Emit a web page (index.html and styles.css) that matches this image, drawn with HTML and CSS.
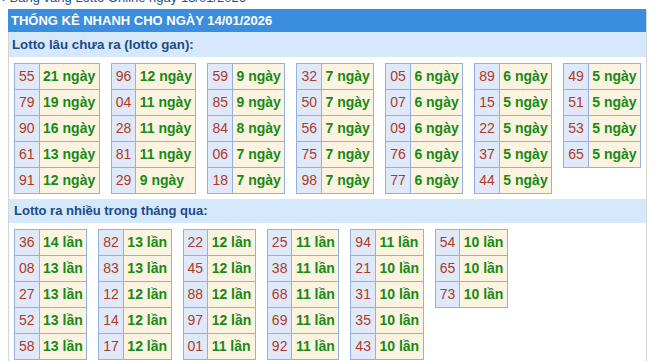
FILE: index.html
```html
<!DOCTYPE html>
<html lang="vi">
<head>
<meta charset="utf-8">
<title>Thống kê nhanh</title>
<link rel="stylesheet" href="styles.css">
</head>
<body>
<div class="prev"><span class="arrow">›</span> Bảng vàng Lotto Online ngày 13/01/2026</div>
<div class="box">
  <div class="head">THỐNG KÊ NHANH CHO NGÀY 14/01/2026</div>
  <div class="sub">Lotto lâu chưa ra (lotto gan):</div>
  <div class="tables">
    <table class="t"><tr><td class="n">55</td><td class="v">21 ngày</td></tr><tr><td class="n">79</td><td class="v">19 ngày</td></tr><tr><td class="n">90</td><td class="v">16 ngày</td></tr><tr><td class="n">61</td><td class="v">13 ngày</td></tr><tr><td class="n">91</td><td class="v">12 ngày</td></tr></table>
    <table class="t"><tr><td class="n">96</td><td class="v">12 ngày</td></tr><tr><td class="n">04</td><td class="v">11 ngày</td></tr><tr><td class="n">28</td><td class="v">11 ngày</td></tr><tr><td class="n">81</td><td class="v">11 ngày</td></tr><tr><td class="n">29</td><td class="v">9 ngày</td></tr></table>
    <table class="t"><tr><td class="n">59</td><td class="v">9 ngày</td></tr><tr><td class="n">85</td><td class="v">9 ngày</td></tr><tr><td class="n">84</td><td class="v">8 ngày</td></tr><tr><td class="n">06</td><td class="v">7 ngày</td></tr><tr><td class="n">18</td><td class="v">7 ngày</td></tr></table>
    <table class="t"><tr><td class="n">32</td><td class="v">7 ngày</td></tr><tr><td class="n">50</td><td class="v">7 ngày</td></tr><tr><td class="n">56</td><td class="v">7 ngày</td></tr><tr><td class="n">75</td><td class="v">7 ngày</td></tr><tr><td class="n">98</td><td class="v">7 ngày</td></tr></table>
    <table class="t"><tr><td class="n">05</td><td class="v">6 ngày</td></tr><tr><td class="n">07</td><td class="v">6 ngày</td></tr><tr><td class="n">09</td><td class="v">6 ngày</td></tr><tr><td class="n">76</td><td class="v">6 ngày</td></tr><tr><td class="n">77</td><td class="v">6 ngày</td></tr></table>
    <table class="t"><tr><td class="n">89</td><td class="v">6 ngày</td></tr><tr><td class="n">15</td><td class="v">5 ngày</td></tr><tr><td class="n">22</td><td class="v">5 ngày</td></tr><tr><td class="n">37</td><td class="v">5 ngày</td></tr><tr><td class="n">44</td><td class="v">5 ngày</td></tr></table>
    <table class="t"><tr><td class="n">49</td><td class="v">5 ngày</td></tr><tr><td class="n">51</td><td class="v">5 ngày</td></tr><tr><td class="n">53</td><td class="v">5 ngày</td></tr><tr><td class="n">65</td><td class="v">5 ngày</td></tr></table>
  </div>
  <div class="sub sub2">Lotto ra nhiều trong tháng qua:</div>
  <div class="tables">
    <table class="t"><tr><td class="n">36</td><td class="v">14 lần</td></tr><tr><td class="n">08</td><td class="v">13 lần</td></tr><tr><td class="n">27</td><td class="v">13 lần</td></tr><tr><td class="n">52</td><td class="v">13 lần</td></tr><tr><td class="n">58</td><td class="v">13 lần</td></tr></table>
    <table class="t"><tr><td class="n">82</td><td class="v">13 lần</td></tr><tr><td class="n">83</td><td class="v">13 lần</td></tr><tr><td class="n">12</td><td class="v">12 lần</td></tr><tr><td class="n">14</td><td class="v">12 lần</td></tr><tr><td class="n">17</td><td class="v">12 lần</td></tr></table>
    <table class="t"><tr><td class="n">22</td><td class="v">12 lần</td></tr><tr><td class="n">45</td><td class="v">12 lần</td></tr><tr><td class="n">88</td><td class="v">12 lần</td></tr><tr><td class="n">97</td><td class="v">12 lần</td></tr><tr><td class="n">01</td><td class="v">11 lần</td></tr></table>
    <table class="t"><tr><td class="n">25</td><td class="v">11 lần</td></tr><tr><td class="n">38</td><td class="v">11 lần</td></tr><tr><td class="n">68</td><td class="v">11 lần</td></tr><tr><td class="n">69</td><td class="v">11 lần</td></tr><tr><td class="n">92</td><td class="v">11 lần</td></tr></table>
    <table class="t"><tr><td class="n">94</td><td class="v">11 lần</td></tr><tr><td class="n">21</td><td class="v">10 lần</td></tr><tr><td class="n">31</td><td class="v">10 lần</td></tr><tr><td class="n">35</td><td class="v">10 lần</td></tr><tr><td class="n">43</td><td class="v">10 lần</td></tr></table>
    <table class="t"><tr><td class="n">54</td><td class="v">10 lần</td></tr><tr><td class="n">65</td><td class="v">10 lần</td></tr><tr><td class="n">73</td><td class="v">10 lần</td></tr></table>
  </div>
</div>
</body>
</html>
```
FILE: styles.css
```css
html, body {
  margin: 0;
  padding: 0;
  background: #ffffff;
  font-family: "Liberation Sans", Arial, sans-serif;
}
body {
  overflow: hidden;
}
.prev {
  margin: -10px 0 0 2px;
  height: 15px;
  line-height: 15px;
  font-size: 13px;
  color: #23538f;
  white-space: nowrap;
}
.arrow {
  display: inline-block;
  width: 4px;
}
.box {
  margin: 4px 0 0 8px;
  width: 639px;
  box-sizing: border-box;
  border-left: 1px solid #d4d4d4;
  border-right: 1px solid #d4d4d4;
}
.head {
  height: 23px;
  line-height: 23px;
  background: #3b8ddd;
  color: #ffffff;
  font-weight: bold;
  font-size: 13px;
  padding-left: 3px;
  margin-left: -1px;
}
.sub {
  height: 25px;
  line-height: 25px;
  background: #d6e8fb;
  color: #1b4b88;
  font-weight: bold;
  font-size: 13.3px;
  padding-left: 3px;
}
.sub2 {
  height: 24px;
  line-height: 24px;
  padding-left: 5px;
  font-size: 13px;
}
.tables {
  display: flex;
  align-items: flex-start;
  gap: 11px;
  padding: 6px 0 5px 5px;
}
.t {
  border-collapse: collapse;
  font-size: 14px;
}
.t td {
  border: 1px solid #93b1e0;
  line-height: 25px;
  padding: 0 3.5px;
  white-space: nowrap;
}
.t td.n {
  background: #dfe9f9;
  color: #b13a26;
  padding: 0 4px;
}
.t td.v {
  background: #fdf3e1;
  color: #178a17;
  font-weight: bold;
}
```
